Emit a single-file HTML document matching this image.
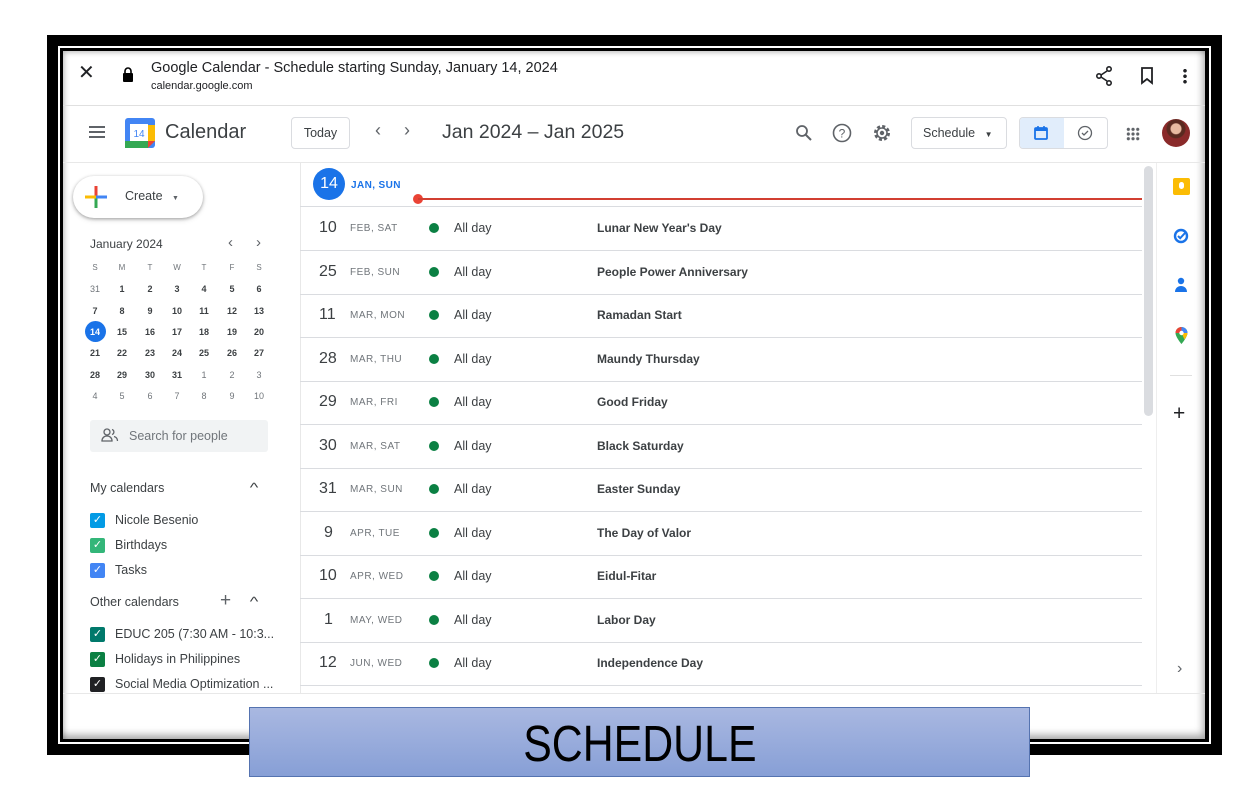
<!DOCTYPE html>
<html><head><meta charset="utf-8">
<style>
*{margin:0;padding:0;box-sizing:border-box}
body{width:1258px;height:789px;background:#fff;position:relative;overflow:hidden;font-family:"Liberation Sans",Arial,sans-serif;color:#3c4043}
.a{position:absolute}
.frame1{left:47px;top:35px;width:1175px;height:720px;background:#000}
.frame2{left:58px;top:46px;width:1153px;height:698px;background:#fff}
.frame3{left:60px;top:48px;width:1149px;height:694px;background:#000}
.content{left:63px;top:51px;width:1142px;height:688px;background:#fff;box-shadow:inset -6px -8px 8px -4px rgba(0,0,0,.35),inset 4px 4px 6px -3px rgba(0,0,0,.3)}
.mc{font-size:9px;color:#3c4043;width:20px;text-align:center;font-weight:bold}
.dim{color:#70757a;font-weight:normal}
.row{left:300px;width:842px;height:44px;border-bottom:1px solid #dadce0}
.dn{position:absolute;left:19px;top:12px;font-size:16px;color:#3c4043}
.dl{position:absolute;left:50px;top:16px;font-size:10px;color:#70757a;letter-spacing:.5px}
.dot{position:absolute;left:129px;top:16px;width:10px;height:10px;border-radius:50%;background:#0b8043}
.ad{position:absolute;left:154px;top:14px;font-size:12.5px;color:#3c4043}
.ev{position:absolute;left:297px;top:14px;font-size:12px;color:#3c4043;font-weight:bold}
.cb{width:15px;height:15px;border-radius:2px;color:#fff;font-size:11px;line-height:15px;text-align:center}
.cl{font-size:12.5px;color:#3c4043}
</style></head><body>
<div class="a frame1"></div>
<div class="a frame2"></div>
<div class="a frame3"></div>
<div class="a content"></div>

<div class="a" style="left:78px;top:60px;font-size:20px;color:#202124">✕</div>
<svg class="a" style="left:122px;top:67px" width="12" height="16" viewBox="0 0 12 16"><rect x="1" y="6" width="10" height="9" rx="1" fill="#000"/><path d="M3 6V4a3 3 0 0 1 6 0v2" stroke="#000" stroke-width="1.6" fill="none"/></svg>
<div class="a" style="left:151px;top:60px;font-size:14.5px;color:#202124">Google Calendar - Schedule starting Sunday, January 14, 2024</div>
<div class="a" style="left:151px;top:80px;font-size:11px;color:#202124">calendar.google.com</div>
<svg class="a" style="left:1095px;top:66px" width="18" height="20" viewBox="0 0 18 20"><circle cx="14" cy="3" r="2.2" fill="none" stroke="#202124" stroke-width="1.6"/><circle cx="4" cy="10" r="2.2" fill="none" stroke="#202124" stroke-width="1.6"/><circle cx="14" cy="17" r="2.2" fill="none" stroke="#202124" stroke-width="1.6"/><path d="M6 9l6-4M6 11l6 4" stroke="#202124" stroke-width="1.6"/></svg>
<svg class="a" style="left:1140px;top:67px" width="14" height="18" viewBox="0 0 14 18"><path d="M2 1h10v15l-5-4-5 4z" fill="none" stroke="#202124" stroke-width="1.8"/></svg>
<div class="a" style="left:1183px;top:68px;width:4px;height:16px;background:radial-gradient(circle,#202124 1.6px,transparent 2px) 0 0/4px 5.5px"></div>
<div class="a" style="left:63px;top:105px;width:1142px;height:1px;background:#e0e0e0"></div>

<div class="a" style="left:89px;top:126px;width:16px;height:2px;background:#5f6368;box-shadow:0 5px 0 #5f6368,0 10px 0 #5f6368"></div>
<svg class="a" style="left:125px;top:118px" width="30" height="30" viewBox="0 0 30 30"><rect x="0" y="0" width="30" height="30" rx="3" fill="#4285f4"/><rect x="0" y="23" width="23" height="7" fill="#34a853"/><rect x="23" y="7" width="7" height="16" fill="#fbbc04"/><path d="M23 23h7l-7 7z" fill="#ea4335"/><rect x="5" y="6" width="18" height="17" fill="#fff"/><text x="14" y="19" font-size="10" text-anchor="middle" fill="#4285f4" font-family="Liberation Sans">14</text></svg>
<div class="a" style="left:165px;top:121px;font-size:20px;color:#3c4043">Calendar</div>
<div class="a" style="left:291px;top:117px;width:59px;height:32px;border:1px solid #dadce0;border-radius:4px;font-size:12.5px;text-align:center;line-height:30px">Today</div>
<div class="a" style="left:375px;top:120px;font-size:18px;color:#5f6368">‹</div>
<div class="a" style="left:404px;top:120px;font-size:18px;color:#5f6368">›</div>
<div class="a" style="left:442px;top:121px;font-size:19.5px;color:#3c4043">Jan 2024 – Jan 2025</div>
<svg class="a" style="left:795px;top:124px" width="18" height="18" viewBox="0 0 18 18"><circle cx="7" cy="7" r="5" fill="none" stroke="#5f6368" stroke-width="1.8"/><path d="M11 11l5 5" stroke="#5f6368" stroke-width="2"/></svg>
<svg class="a" style="left:832px;top:123px" width="20" height="20" viewBox="0 0 20 20"><circle cx="10" cy="10" r="8.5" fill="none" stroke="#5f6368" stroke-width="1.6"/><text x="10" y="14.5" font-size="12" text-anchor="middle" fill="#5f6368" font-family="Liberation Sans">?</text></svg>
<svg class="a" style="left:872px;top:123px" width="20" height="20" viewBox="0 0 20 20"><circle cx="10" cy="10" r="6.5" fill="none" stroke="#5f6368" stroke-width="3" stroke-dasharray="3 2.1"/><circle cx="10" cy="10" r="5" fill="none" stroke="#5f6368" stroke-width="1.5"/><circle cx="10" cy="10" r="2.2" fill="#5f6368"/></svg>
<div class="a" style="left:911px;top:117px;width:96px;height:32px;border:1px solid #dadce0;border-radius:4px;font-size:12.5px;line-height:30px;padding-left:11px">Schedule <span style="font-size:8px;margin-left:6px">▼</span></div>
<div class="a" style="left:1019px;top:117px;width:89px;height:32px;border:1px solid #dadce0;border-radius:4px;overflow:hidden"><div style="width:44px;height:32px;background:#e1edfb"></div></div>
<svg class="a" style="left:1034px;top:125px" width="14" height="15" viewBox="0 0 14 15"><rect x="1" y="3" width="12" height="11" rx="1" fill="none" stroke="#1a73e8" stroke-width="1.8"/><rect x="1" y="3" width="12" height="3" fill="#1a73e8"/><path d="M4 1v3M10 1v3" stroke="#1a73e8" stroke-width="1.6"/></svg>
<svg class="a" style="left:1077px;top:125px" width="16" height="16" viewBox="0 0 16 16"><circle cx="8" cy="8" r="6.5" fill="none" stroke="#5f6368" stroke-width="1.3"/><path d="M5 8l2 2 4-4" fill="none" stroke="#5f6368" stroke-width="1.3"/></svg>
<div class="a" style="left:1126px;top:127px;width:14px;height:14px;background:radial-gradient(circle,#5f6368 1.5px,transparent 1.8px) 0 0/4.7px 4.7px"></div>
<div class="a" style="left:1162px;top:119px;width:28px;height:28px;border-radius:50%;background:radial-gradient(circle at 50% 35%,#e8b9a0 0 5px,#5a2a20 6px 9px,#8a2a2a 10px)"></div>
<div class="a" style="left:63px;top:162px;width:1142px;height:1px;background:#e8e8e8"></div>

<div class="a" style="left:73px;top:176px;width:130px;height:42px;border-radius:21px;background:#fff;box-shadow:0 1px 3px rgba(0,0,0,.3),0 2px 6px rgba(0,0,0,.12)"></div>
<svg class="a" style="left:85px;top:186px" width="22" height="22" viewBox="0 0 22 22"><rect x="9.5" y="0" width="3" height="11" fill="#ea4335"/><rect x="9.5" y="11" width="3" height="11" fill="#34a853"/><rect x="0" y="9.5" width="11" height="3" fill="#fbbc04"/><rect x="11" y="9.5" width="11" height="3" fill="#4285f4"/></svg>
<div class="a" style="left:125px;top:189px;font-size:12.5px;color:#3c4043">Create <span style="font-size:7px;margin-left:6px;color:#5f6368">▼</span></div>
<div class="a" style="left:90px;top:237px;font-size:12px;color:#3c4043">January 2024</div>
<div class="a" style="left:228px;top:234px;font-size:15px;color:#5f6368">‹</div>
<div class="a" style="left:256px;top:234px;font-size:15px;color:#5f6368">›</div>
<div class="a" style="left:85px;top:321px;width:21px;height:21px;border-radius:50%;background:#1a73e8"></div>
<div id="mini"></div>
<div class="a" style="left:90px;top:420px;width:178px;height:32px;background:#f1f3f4;border-radius:3px"></div>
<svg class="a" style="left:101px;top:428px" width="18" height="14" viewBox="0 0 18 14"><circle cx="6" cy="4" r="3" fill="none" stroke="#5f6368" stroke-width="1.3"/><path d="M1 13c0-3 2-5 5-5s5 2 5 5z" fill="none" stroke="#5f6368" stroke-width="1.3"/><path d="M11 1.5a2.6 2.6 0 0 1 0 5M13 8.5c2 .5 3.5 2 3.5 4.5" fill="none" stroke="#5f6368" stroke-width="1.3"/></svg>
<div class="a" style="left:129px;top:429px;font-size:12.5px;color:#70757a">Search for people</div>
<div class="a cl" style="left:90px;top:481px">My calendars</div>
<div class="a" style="left:251px;top:480px;font-size:13px;color:#3c4043;transform:scaleX(1.4)">^</div>
<div class="a cb" style="left:90px;top:513px;background:#039be5">✓</div><div class="a cl" style="left:115px;top:513px">Nicole Besenio</div>
<div class="a cb" style="left:90px;top:538px;background:#33b679">✓</div><div class="a cl" style="left:115px;top:538px">Birthdays</div>
<div class="a cb" style="left:90px;top:563px;background:#4285f4">✓</div><div class="a cl" style="left:115px;top:563px">Tasks</div>
<div class="a cl" style="left:90px;top:595px">Other calendars</div>
<div class="a" style="left:220px;top:590px;font-size:19px;color:#5f6368">+</div>
<div class="a" style="left:251px;top:594px;font-size:13px;color:#3c4043;transform:scaleX(1.4)">^</div>
<div class="a cb" style="left:90px;top:627px;background:#00796b">✓</div><div class="a cl" style="left:115px;top:627px">EDUC 205 (7:30 AM - 10:3...</div>
<div class="a cb" style="left:90px;top:652px;background:#0b8043">✓</div><div class="a cl" style="left:115px;top:652px">Holidays in Philippines</div>
<div class="a cb" style="left:90px;top:677px;background:#202124">✓</div><div class="a cl" style="left:115px;top:677px">Social Media Optimization ...</div>

<div class="a" style="left:300px;top:163px;width:1px;height:530px;background:#e8e8e8"></div>
<div class="a" style="left:313px;top:168px;width:32px;height:32px;border-radius:50%;background:#1a73e8;color:#fff;font-size:16px;text-align:center;line-height:32px">14</div>
<div class="a" style="left:351px;top:180px;font-size:10px;color:#1a73e8;font-weight:bold;letter-spacing:.4px">JAN, SUN</div>
<div class="a" style="left:413px;top:194px;width:10px;height:10px;border-radius:50%;background:#ea4335"></div>
<div class="a" style="left:418px;top:198px;width:724px;height:2px;background:#d23f31"></div>
<div class="a" style="left:300px;top:206px;width:842px;height:1px;background:#dadce0"></div>
<div id="rows"></div>
<div class="a" style="left:1144px;top:166px;width:9px;height:250px;border-radius:5px;background:#dadce0"></div>
<div class="a" style="left:1156px;top:163px;width:1px;height:530px;background:#eee"></div>
<div class="a" style="left:63px;top:693px;width:1142px;height:1px;background:#e8e8e8"></div>

<div class="a" style="left:1173px;top:178px;width:17px;height:17px;border-radius:2px;background:#fbbc04"></div>
<div class="a" style="left:1179px;top:182px;width:5px;height:7px;border-radius:3px;background:#fff"></div>
<svg class="a" style="left:1173px;top:228px" width="16" height="16" viewBox="0 0 16 16"><circle cx="8" cy="8" r="6" fill="none" stroke="#1a73e8" stroke-width="2.4"/><path d="M5 8l2.2 2.2L12 5" fill="none" stroke="#1a73e8" stroke-width="2"/></svg>
<svg class="a" style="left:1174px;top:277px" width="14" height="16" viewBox="0 0 14 16"><circle cx="7" cy="4" r="3.2" fill="#1a73e8"/><path d="M1 15c0-4 3-6 6-6s6 2 6 6z" fill="#1a73e8"/></svg>
<svg class="a" style="left:1175px;top:327px" width="13" height="18" viewBox="0 0 13 18"><path d="M6.5 0a6 6 0 0 0-6 6c0 4 6 11 6 11s6-7 6-11a6 6 0 0 0-6-6z" fill="#34a853"/><path d="M6.5 0a6 6 0 0 1 6 6L6.5 6z" fill="#4285f4"/><path d="M.5 6a6 6 0 0 1 6-6v6z" fill="#ea4335"/><path d="M12.5 6c0 2-1.5 4.5-3 6.5L6.5 6z" fill="#fbbc04"/><circle cx="6.5" cy="6" r="2.2" fill="#fff"/></svg>
<div class="a" style="left:1170px;top:375px;width:22px;height:1px;background:#e0e0e0"></div>
<div class="a" style="left:1173px;top:402px;font-size:21px;color:#202124">+</div>
<div class="a" style="left:1177px;top:660px;font-size:16px;color:#5f6368">›</div>

<div class="a" style="left:249px;top:707px;width:781px;height:70px;background:linear-gradient(#a9b8e1,#879fd6);border:1px solid #5573b0"></div>
<div class="a" style="left:249px;top:716px;width:781px;text-align:center;font-size:51px;color:#000;line-height:56px"><span style="display:inline-block;transform:scaleX(.84)">SCHEDULE</span></div>

<script>
var m='';var days=[[31,1,2,3,4,5,6],[7,8,9,10,11,12,13],[14,15,16,17,18,19,20],[21,22,23,24,25,26,27],[28,29,30,31,1,2,3],[4,5,6,7,8,9,10]];
var xs=[95,122,150,177,204,232,259];var h=['S','M','T','W','T','F','S'];
for(var i=0;i<7;i++)m+='<div class="a mc dim" style="left:'+(xs[i]-10)+'px;top:263px;font-size:8px">'+h[i]+'</div>';
var ys=[284,306,327,348,370,391];
for(var r=0;r<6;r++)for(i=0;i<7;i++){var d=days[r][i];var dim=(r==0&&i==0)||(r==4&&i>=4)||r==5;
m+='<div class="a mc'+(dim?' dim':'')+'" style="left:'+(xs[i]-10)+'px;top:'+ys[r]+'px;'+((r==2&&i==0)?'color:#fff':'')+'">'+d+'</div>';}
document.getElementById('mini').outerHTML=m;
var ev=[['10','FEB, SAT','Lunar New Year\'s Day'],['25','FEB, SUN','People Power Anniversary'],['11','MAR, MON','Ramadan Start'],['28','MAR, THU','Maundy Thursday'],['29','MAR, FRI','Good Friday'],['30','MAR, SAT','Black Saturday'],['31','MAR, SUN','Easter Sunday'],['9','APR, TUE','The Day of Valor'],['10','APR, WED','Eidul-Fitar'],['1','MAY, WED','Labor Day'],['12','JUN, WED','Independence Day']];
var s='';for(var k=0;k<ev.length;k++){var t=207+k*43.5;var one=ev[k][0].length==1;
s+='<div class="a row" style="top:'+t+'px"><div class="dn" style="'+(one?'left:24px':'')+'">'+ev[k][0]+'</div><div class="dl">'+ev[k][1]+'</div><div class="dot"></div><div class="ad">All day</div><div class="ev">'+ev[k][2]+'</div></div>';}
document.getElementById('rows').outerHTML=s;
</script>
</body></html>
